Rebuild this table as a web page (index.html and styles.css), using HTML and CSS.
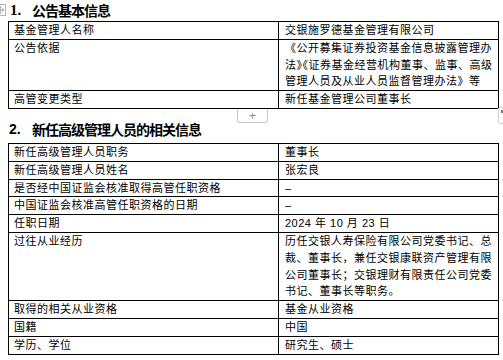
FILE: index.html
```html
<!DOCTYPE html>
<html lang="zh-CN">
<head>
<meta charset="utf-8">
<title>公告基本信息</title>
<link rel="stylesheet" href="styles.css">
</head>
<body>
<div class="page">
  <span class="move-handle" aria-hidden="true">
    <svg width="12" height="12" viewBox="0 0 12 12">
      <rect x="0.5" y="0.5" width="11" height="11" fill="#fff" stroke="#b5b5b5"/>
      <path d="M2.5 6H9.5M6 2.5V9.5M8 4.5L9.8 6L8 7.5M4 4.5L2.2 6L4 7.5M4.5 4L6 2.2L7.5 4M4.5 8L6 9.8L7.5 8" fill="none" stroke="#8a8a8a" stroke-width="0.8"/>
    </svg>
  </span>

  <h2 class="sec-title first"><span class="num serif">1.</span><span class="title">公告基本信息</span></h2>
  <table class="info">
    <colgroup><col class="c1"><col class="c2"></colgroup>
    <tr><td>基金管理人名称</td><td>交银施罗德基金管理有限公司</td></tr>
    <tr><td>公告依据</td><td>《公开募集证券投资基金信息披露管理办法<span class="half">》《</span>证券基金经营机构董事、监事、高级管理人员及从业人员监督管理办法》等</td></tr>
    <tr><td>高管变更类型</td><td>新任基金管理公司董事长</td></tr>
  </table>

  <button class="add-row" type="button">+</button>
  <span class="edge-handle" aria-hidden="true"><span class="edge-dot"></span></span>

  <h2 class="sec-title second"><span class="num">2.</span><span class="title">新任高级管理人员的相关信息</span></h2>
  <table class="info">
    <colgroup><col class="c1"><col class="c2"></colgroup>
    <tr><td>新任高级管理人员职务</td><td>董事长</td></tr>
    <tr><td>新任高级管理人员姓名</td><td>张宏良</td></tr>
    <tr><td>是否经中国证监会核准取得高管任职资格</td><td>–</td></tr>
    <tr><td>中国证监会核准高管任职资格的日期</td><td>–</td></tr>
    <tr><td>任职日期</td><td>2024 年 10 月 23 日</td></tr>
    <tr><td>过往从业经历</td><td>历任交银人寿保险有限公司党委书记、总裁、董事长，兼任交银康联资产管理有限公司董事长；交银理财有限责任公司党委书记、董事长等职务。</td></tr>
    <tr><td>取得的相关从业资格</td><td>基金从业资格</td></tr>
    <tr><td>国籍</td><td>中国</td></tr>
    <tr><td>学历、学位</td><td>研究生、硕士</td></tr>
  </table>
</div>
</body>
</html>
```

FILE: styles.css
```css
html, body {
  margin: 0;
  padding: 0;
  background: #fff;
}

.page {
  position: relative;
  padding: 0 5px 0 8px;
  color: #000;
}

.move-handle {
  position: absolute;
  left: 0;
  top: 4px;
  width: 6px;
  height: 12px;
  overflow: hidden;
  direction: rtl;
}

.move-handle svg {
  display: block;
}

.sec-title {
  display: flex;
  margin: 0;
  height: 21px;
  line-height: 21px;
  font-family: "Noto Sans CJK SC", sans-serif;
  font-size: 14px;
  font-weight: bold;
}

.sec-title .num {
  width: 23px;
  padding-left: 1px;
  font-family: "Liberation Sans", sans-serif;
  font-size: 14px;
}

.sec-title .num.serif {
  padding-left: 2px;
  width: 22px;
  font-family: "Liberation Serif", serif;
  font-size: 15px;
}

.sec-title .title {
  letter-spacing: -1px;
}

.sec-title.second {
  margin-top: 10px;
  margin-bottom: 3px;
}

.info {
  border-collapse: collapse;
  width: 491px;
  table-layout: fixed;
  font-family: "Liberation Sans", "Noto Sans CJK SC", sans-serif;
  font-size: 11px;
  letter-spacing: 0.5px;
  line-height: 16.8px;
}

.info col.c1 {
  width: 270px;
}

.info td {
  border: 1px solid #000;
  padding: 0 4px 0 5px;
  vertical-align: top;
}

.info td + td {
  padding: 0 3px 0 6px;
}

.half {
  font-feature-settings: "halt";
}

.add-row {
  position: absolute;
  left: 237px;
  top: 109px;
  width: 31px;
  height: 14px;
  margin: 0;
  padding: 0;
  border: 1px solid #c9c9c9;
  border-top: none;
  border-radius: 0 0 3px 3px;
  background: #fff;
  color: #8c8c8c;
  font-family: "Liberation Sans", sans-serif;
  font-size: 12px;
  line-height: 12px;
}

.edge-handle {
  position: absolute;
  left: 498px;
  top: 107px;
  width: 8px;
  height: 15px;
  border: 1px solid #cfcfcf;
  border-radius: 2px;
  background: #fff;
}

.edge-dot {
  position: absolute;
  left: 2px;
  top: 2px;
  width: 2px;
  height: 3px;
  background: #777;
}
```
